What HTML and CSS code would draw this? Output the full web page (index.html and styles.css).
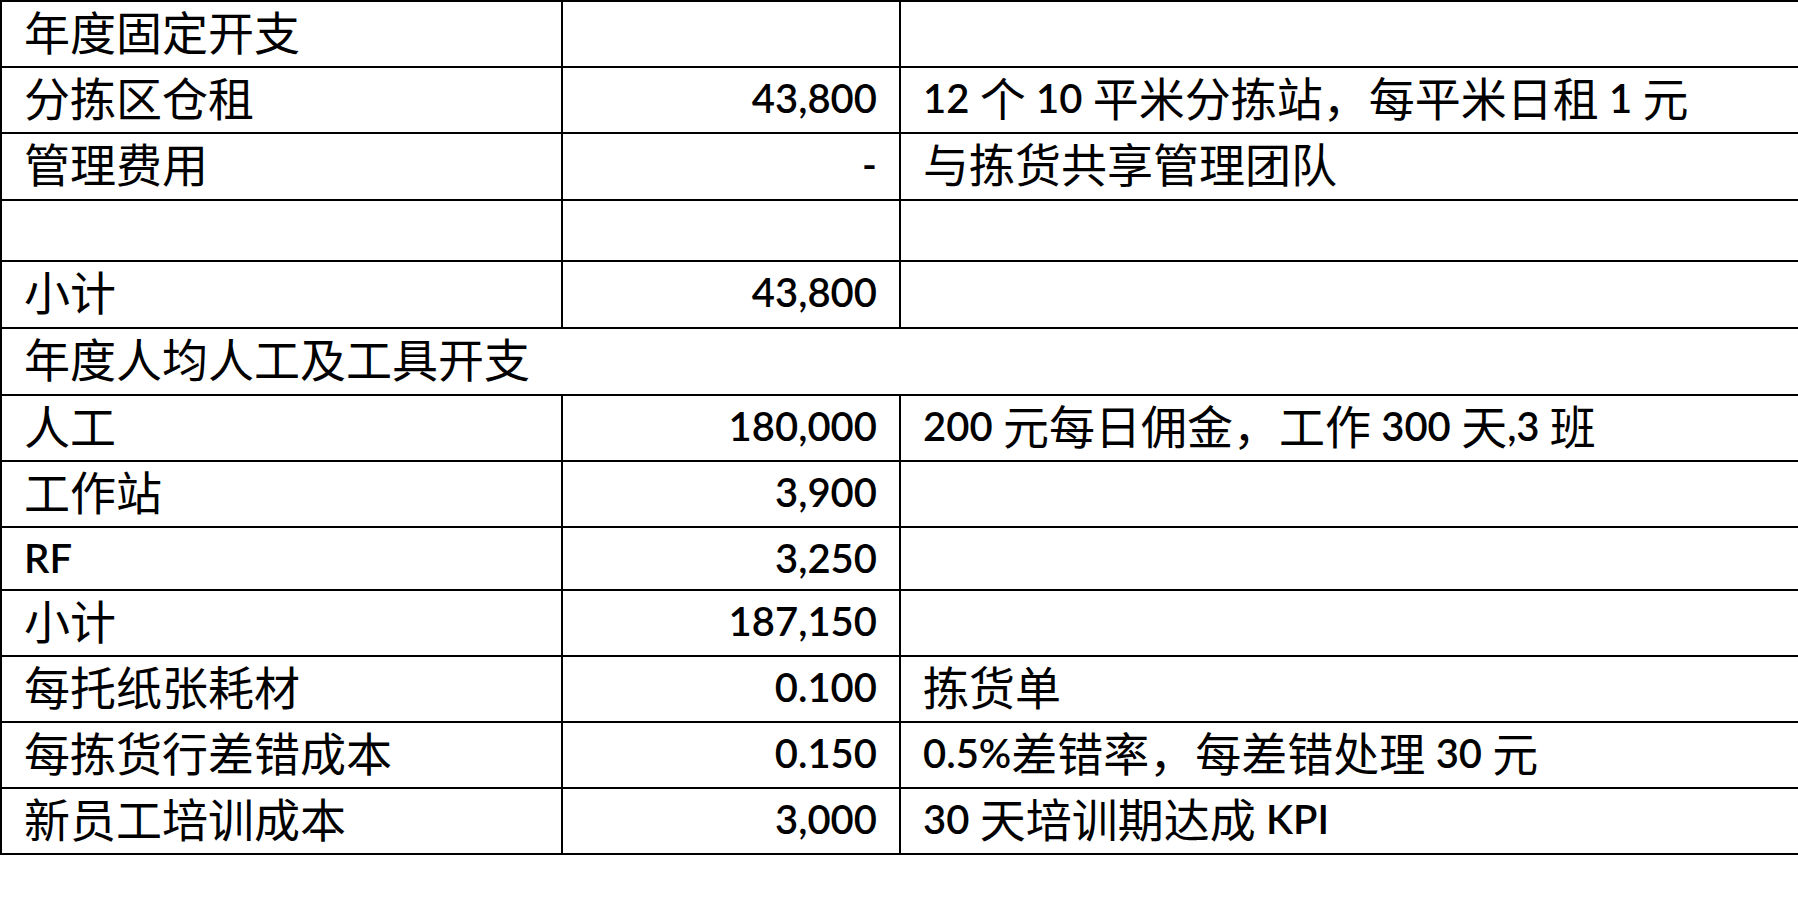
FILE: index.html
```html
<!DOCTYPE html>
<html lang="zh-CN">
<head>
<meta charset="utf-8">
<title>年度开支</title>
<link rel="stylesheet" href="styles.css">
</head>
<body>
<div class="sheet">
  <div class="row">
    <div class="cell label">年度固定开支</div>
    <div class="cell num"></div>
    <div class="cell note"></div>
  </div>
  <div class="row">
    <div class="cell label">分拣区仓租</div>
    <div class="cell num"><span class="n">43,800</span></div>
    <div class="cell note"><span class="n">12</span> 个 <span class="n">10</span> 平米分拣站，每平米日租 <span class="n">1</span> 元</div>
  </div>
  <div class="row tall">
    <div class="cell label">管理费用</div>
    <div class="cell num"><span class="n">-</span></div>
    <div class="cell note">与拣货共享管理团队</div>
  </div>
  <div class="row short">
    <div class="cell label"></div>
    <div class="cell num"></div>
    <div class="cell note"></div>
  </div>
  <div class="row tall">
    <div class="cell label">小计</div>
    <div class="cell num"><span class="n">43,800</span></div>
    <div class="cell note"></div>
  </div>
  <div class="row tall">
    <div class="cell label span-all">年度人均人工及工具开支</div>
  </div>
  <div class="row">
    <div class="cell label">人工</div>
    <div class="cell num"><span class="n">180,000</span></div>
    <div class="cell note"><span class="n">200</span> 元每日佣金，工作 <span class="n">300</span> 天<span class="n">,3</span> 班</div>
  </div>
  <div class="row">
    <div class="cell label">工作站</div>
    <div class="cell num"><span class="n">3,900</span></div>
    <div class="cell note"></div>
  </div>
  <div class="row mid">
    <div class="cell label"><span class="n">RF</span></div>
    <div class="cell num"><span class="n">3,250</span></div>
    <div class="cell note"></div>
  </div>
  <div class="row">
    <div class="cell label">小计</div>
    <div class="cell num"><span class="n">187,150</span></div>
    <div class="cell note"></div>
  </div>
  <div class="row">
    <div class="cell label">每托纸张耗材</div>
    <div class="cell num"><span class="n">0.100</span></div>
    <div class="cell note">拣货单</div>
  </div>
  <div class="row">
    <div class="cell label">每拣货行差错成本</div>
    <div class="cell num"><span class="n">0.150</span></div>
    <div class="cell note"><span class="n">0.5%</span>差错率，每差错处理 <span class="n">30</span> 元</div>
  </div>
  <div class="row">
    <div class="cell label">新员工培训成本</div>
    <div class="cell num"><span class="n">3,000</span></div>
    <div class="cell note"><span class="n">30</span> 天培训期达成 <span class="n">KPI</span></div>
  </div>
</div>
</body>
</html>
```
FILE: styles.css
```css
html, body {
  margin: 0;
  padding: 0;
  background: #fff;
}

body {
  font-family: "Noto Sans CJK SC", "Noto Sans", sans-serif;
  font-size: 46px;
  line-height: 46px;
  color: #000;
}

.sheet {
  width: 100%;
  box-sizing: border-box;
  border-top: 2px solid #000;
  border-left: 2px solid #000;
}

.row {
  display: grid;
  grid-template-columns: 561px 338px 1fr;
  height: 66px;
  box-sizing: border-box;
  border-bottom: 2px solid #000;
}

.row.tall { height: 67px; }
.row.short { height: 61px; }
.row.mid { height: 63px; }

.cell {
  box-sizing: border-box;
  padding: 5px 22px 0 22px;
  white-space: nowrap;
}

.label,
.num {
  border-right: 2px solid #000;
}

.num {
  text-align: right;
}

.n {
  font-family: "Lato", "Noto Sans", sans-serif;
  font-size: 40px;
  font-weight: 600;
  vertical-align: 3px;
}

.span-all {
  grid-column: 1 / -1;
  border-right: none;
}
```
